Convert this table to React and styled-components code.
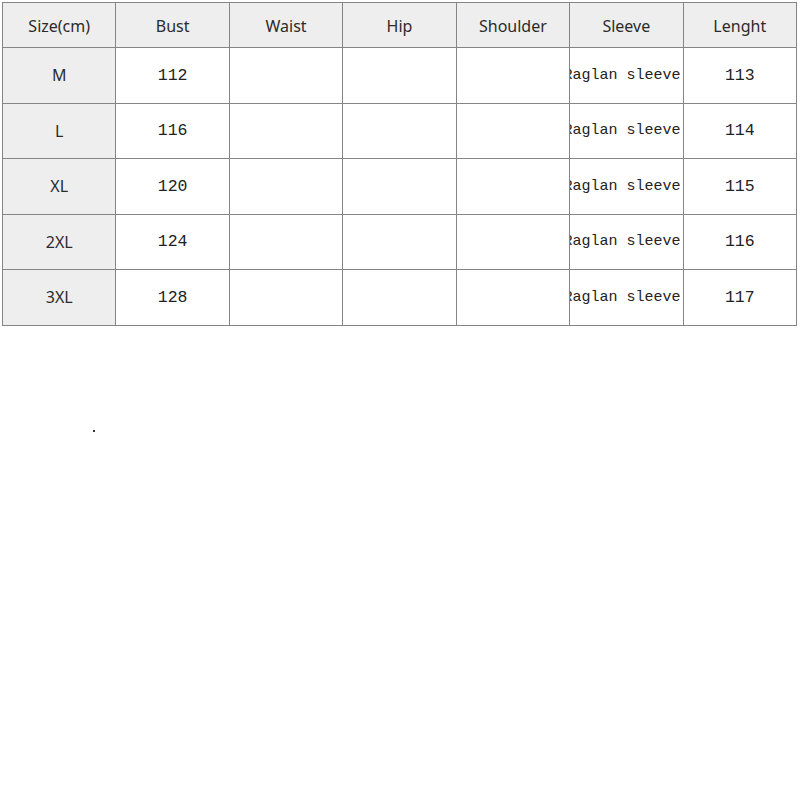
import React from 'react';
import styled, { createGlobalStyle } from 'styled-components';

const GlobalStyle = createGlobalStyle`
  body {
    margin: 0;
    background: #fff;
  }
`;

const Page = styled.div`
  padding: 2px 3px 0 2px;
`;

const Table = styled.table`
  border-collapse: collapse;
  table-layout: fixed;
  width: 795px;
`;

const Head = styled.th`
  height: 42px;
  padding: 2px 0 0;
  border: 1px solid #858585;
  background: #eeeeee;
  font-family: "Noto Sans", "Open Sans", sans-serif;
  font-weight: 400;
  font-size: 16px;
  color: #2b2b2b;
  text-align: center;
`;

const SizeCell = styled.td`
  height: 54.5px;
  padding: 0;
  border: 1px solid #858585;
  background: #eeeeee;
  font-family: "Noto Sans", "Open Sans", sans-serif;
  font-size: 16px;
  color: #2b2b2b;
  text-align: center;
`;

const Cell = styled.td`
  padding: 0;
  border: 1px solid #858585;
  background: #fff;
  font-family: "Liberation Mono", monospace;
  font-size: 16.5px;
  color: #222;
  text-align: center;
  white-space: nowrap;
  overflow: hidden;
`;

const Clip = styled.div`
  display: flex;
  justify-content: flex-end;
  padding-right: 2px;
  overflow: hidden;
  font-size: 15px;
  & > span { flex-shrink: 0; }
`;

const Dot = styled.div`
  width: 2px;
  height: 2px;
  margin: 104px 0 0 91px;
  background: #333;
`;

const columns = ['Size(cm)', 'Bust', 'Waist', 'Hip', 'Shoulder', 'Sleeve', 'Lenght'];

const rows = [
  { size: 'M', bust: 112, length: 113 },
  { size: 'L', bust: 116, length: 114 },
  { size: 'XL', bust: 120, length: 115 },
  { size: '2XL', bust: 124, length: 116 },
  { size: '3XL', bust: 128, length: 117 },
];

export default function App() {
  return (
    <>
      <GlobalStyle />
      <Page>
        <Table>
          <thead>
            <tr>
              {columns.map((c) => (
                <Head key={c}>{c}</Head>
              ))}
            </tr>
          </thead>
          <tbody>
            {rows.map((r) => (
              <tr key={r.size}>
                <SizeCell>{r.size}</SizeCell>
                <Cell>{r.bust}</Cell>
                <Cell />
                <Cell />
                <Cell />
                <Cell>
                  <Clip><span>Raglan sleeve</span></Clip>
                </Cell>
                <Cell>{r.length}</Cell>
              </tr>
            ))}
          </tbody>
        </Table>
        <Dot />
      </Page>
    </>
  );
}
